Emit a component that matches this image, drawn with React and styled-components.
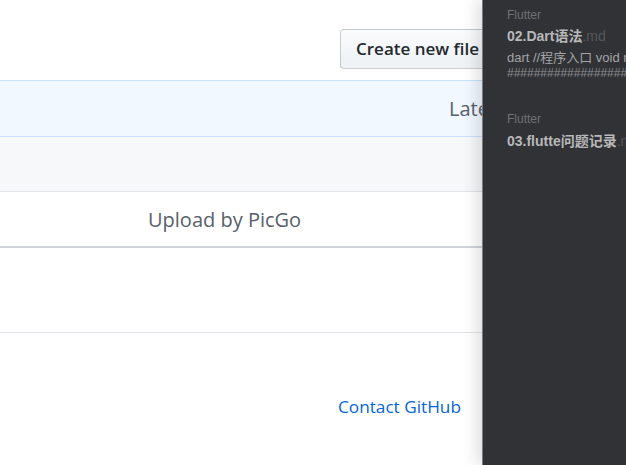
import React from "react";
import styled, { createGlobalStyle } from "styled-components";

const Global = createGlobalStyle`
  html, body { margin: 0; padding: 0; background: #fff; }
  body { font-family: "Open Sans", "Noto Sans", sans-serif; overflow: hidden; }
  #root { width: 626px; height: 465px; overflow: hidden; position: relative; }
`;

const Page = styled.div`
  display: flex;
  flex-direction: column;
  width: 626px;
  height: 465px;
  color: #24292e;
`;

const Toolbar = styled.div`
  display: flex;
  padding: 29px 0 0 340px;
  height: 40px;
`;

const Button = styled.button`
  flex: none;
  font-family: inherit;
  font-size: 17px;
  font-weight: 600;
  line-height: 24px;
  color: #24292e;
  padding: 7px 15px;
  border: 1px solid rgba(27, 31, 35, 0.2);
  border-radius: 4px;
  background-image: linear-gradient(-180deg, #fafbfc 0%, #eff3f6 90%);
  white-space: nowrap;
`;

const Row = styled.div`
  display: flex;
  align-items: center;
  flex: none;
  height: ${(p) => p.$h}px;
  margin-top: ${(p) => p.$mt || 0}px;
  padding-left: ${(p) => p.$pl || 0}px;
  background: ${(p) => p.$bg || "#fff"};
  border-top: ${(p) => p.$bt || "none"};
  border-bottom: ${(p) => p.$bb || "none"};
  font-size: 20px;
  color: #586069;
  white-space: nowrap;
`;

const Footer = styled.div`
  display: flex;
  padding: 62px 0 0 338px;
`;

const Link = styled.a`
  font-size: 17.2px;
  color: #0366d6;
  text-decoration: none;
`;

const Drawer = styled.aside`
  position: absolute;
  top: 0;
  right: 0;
  width: 144px;
  height: 465px;
  background: #313236;
  border-left: 1px solid #7a7b7d;
  box-shadow: -6px 0 14px rgba(0, 0, 0, 0.12);
  overflow: hidden;
  padding: 7px 0 0 24px;
  box-sizing: border-box;
  font-family: "Liberation Sans", "Noto Sans CJK SC", sans-serif;
`;

const Entry = styled.div`
  display: flex;
  flex-direction: column;
  white-space: nowrap;
  margin-bottom: ${(p) => p.$mb || 0}px;
`;

const Category = styled.div`
  font-size: 12px;
  line-height: 16px;
  color: #6f7174;
`;

const Title = styled.div`
  font-size: 14px;
  line-height: 20px;
  font-weight: 700;
  color: #b7b8ba;
  margin-top: ${(p) => p.$mt ?? 3}px;
`;

const Ext = styled.span`
  font-weight: 400;
  color: #55575a;
`;

const Excerpt = styled.div`
  font-size: 13px;
  line-height: 18px;
  color: #a3a4a6;
  margin-top: 3px;
`;

const Hashes = styled.div`
  font-size: 12px;
  line-height: 16px;
  color: #8d8e90;
  margin-top: -2px;
`;

export default function App() {
  return (
    <>
      <Global />
      <Page>
        <Toolbar>
          <Button>Create new file</Button>
        </Toolbar>
        <Row $h={55} $mt={11} $pl={449} $bg="#f1f8ff" $bt="1px solid #c8e1ff" $bb="1px solid #c8e1ff">
          Latest commit
        </Row>
        <Row $h={54} $bg="#f6f8fa" $bb="1px solid #e1e4e8" />
        <Row $h={54} $pl={148} $bb="2px solid #d1d5da">
          Upload by PicGo
        </Row>
        <Row $h={84} $bb="1px solid #e1e4e8" />
        <Footer>
          <Link href="#">Contact GitHub</Link>
        </Footer>
      </Page>
      <Drawer>
        <Entry $mb={30}>
          <Category>Flutter</Category>
          <Title>
            02.Dart语法<Ext>.md</Ext>
          </Title>
          <Excerpt>dart //程序入口 void main()</Excerpt>
          <Hashes>##############################</Hashes>
        </Entry>
        <Entry>
          <Category>Flutter</Category>
          <Title $mt={4}>
            03.flutte问题记录<Ext>.md</Ext>
          </Title>
        </Entry>
      </Drawer>
    </>
  );
}
